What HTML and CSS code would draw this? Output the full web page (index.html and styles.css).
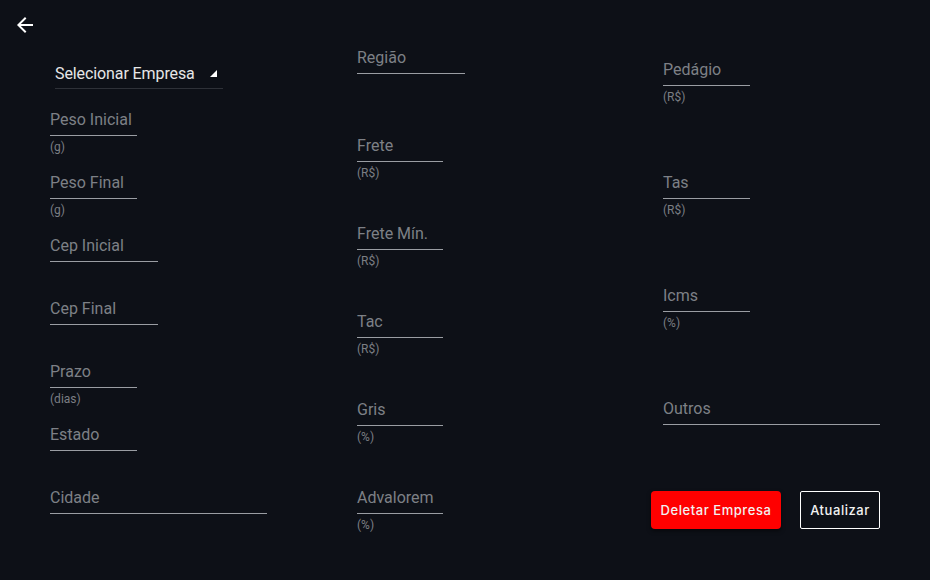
FILE: index.html
```html
<!DOCTYPE html>
<html lang="pt-BR">
<head>
<meta charset="utf-8">
<title>Editar Empresa</title>
<link rel="stylesheet" href="styles.css">
</head>
<body>
<header class="topbar">
  <button class="back" aria-label="Voltar">
    <svg viewBox="0 0 24 24" width="24" height="24"><path fill="currentColor" d="M20 11H7.830l5.59-5.59L12 4l-8 8 8 8 1.41-1.41L7.83 13H20v-2z"/></svg>
  </button>
</header>
<main class="form">
  <section class="col col-1">
    <div class="select">
      <span class="select-text">Selecionar Empresa</span>
      <svg class="select-arrow" viewBox="0 0 7 7" width="7" height="7"><polygon points="0,7 7,0 7,7" fill="#ffffff"/></svg>
    </div>
    <div class="fields">
      <div class="field"><div class="input w-sm">Peso Inicial</div><div class="helper">(g)</div></div>
      <div class="field"><div class="input w-sm">Peso Final</div><div class="helper">(g)</div></div>
      <div class="field"><div class="input w-md">Cep Inicial</div></div>
      <div class="field"><div class="input w-md">Cep Final</div></div>
      <div class="field"><div class="input w-sm">Prazo</div><div class="helper">(dias)</div></div>
      <div class="field"><div class="input w-sm">Estado</div></div>
      <div class="field"><div class="input w-lg">Cidade</div></div>
    </div>
  </section>
  <section class="col col-2">
    <div class="fields">
      <div class="field"><div class="input w-md">Região</div></div>
      <div class="field"><div class="input w-xs">Frete</div><div class="helper">(R$)</div></div>
      <div class="field"><div class="input w-xs">Frete Mín.</div><div class="helper">(R$)</div></div>
      <div class="field"><div class="input w-xs">Tac</div><div class="helper">(R$)</div></div>
      <div class="field"><div class="input w-xs">Gris</div><div class="helper">(%)</div></div>
      <div class="field"><div class="input w-xs">Advalorem</div><div class="helper">(%)</div></div>
    </div>
  </section>
  <section class="col col-3">
    <div class="fields">
      <div class="field"><div class="input w-sm">Pedágio</div><div class="helper">(R$)</div></div>
      <div class="field"><div class="input w-sm">Tas</div><div class="helper">(R$)</div></div>
      <div class="field"><div class="input w-sm">Icms</div><div class="helper">(%)</div></div>
      <div class="field"><div class="input w-lg">Outros</div></div>
    </div>
    <div class="actions">
      <button class="btn btn-danger">Deletar Empresa</button>
      <button class="btn btn-outline">Atualizar</button>
    </div>
  </section>
</main>
</body>
</html>
```
FILE: styles.css
```css
* { box-sizing: border-box; }
html, body {
  margin: 0;
  background: #0d1017;
  width: 930px;
  height: 580px;
  overflow: hidden;
  font-family: Roboto, "Liberation Sans", sans-serif;
}
.topbar {
  height: 44px;
  padding: 13px 0 0 13px;
}
.back {
  display: block;
  width: 24px;
  height: 24px;
  padding: 0;
  margin: 0;
  border: 0;
  background: none;
  color: #ffffff;
}
.back svg { display: block; }
.form {
  display: grid;
  grid-template-columns: 307px 306px 217px;
  padding: 0 50px;
  align-items: start;
}
.col { display: flex; flex-direction: column; }
.col-1 { padding-top: 16px; }
.col-3 { padding-top: 12px; }
.fields { display: flex; flex-direction: column; }
.col-1 .fields { gap: 13px; margin-top: 17px; }
.col-2 .fields { gap: 38px; }
.col-3 .fields { gap: 63px; }
.select {
  display: flex;
  align-items: center;
  justify-content: space-between;
  width: 168px;
  margin-left: 5px;
  padding: 4px 6px 5px 0;
  border-bottom: 1px solid #2e3138;
  font-size: 16px;
  line-height: 19px;
  letter-spacing: -0.1px;
  color: #e6e6e7;
}
.select-arrow { display: block; margin-top: -1px; }
.field { height: 50px; }
.input {
  padding: 4px 0 6px;
  font-size: 16px;
  line-height: 19px;
  color: #7d8086;
  border-bottom: 1px solid #9a9da3;
  white-space: nowrap;
}
.w-xs { width: 86px; }
.w-sm { width: 87px; }
.w-md { width: 108px; }
.w-lg { width: 217px; }
.helper {
  margin-top: 2px;
  font-size: 12px;
  line-height: 18px;
  color: #7b7e84;
}
.actions {
  display: flex;
  justify-content: flex-end;
  gap: 19px;
  margin-top: 46px;
  margin-left: -12px;
}
.btn {
  height: 38px;
  padding: 0;
  font-family: Inter, "Open Sans", sans-serif;
  font-size: 13px;
  font-weight: 500;
  letter-spacing: 0.55px;
  color: #f2f2f2;
  cursor: pointer;
}
.btn-danger {
  width: 130px;
  background: #ff0000;
  border: 0;
  border-radius: 4px;
  box-shadow: 0 2px 4px rgba(0, 0, 0, 0.5);
}
.btn-outline {
  width: 80px;
  background: transparent;
  border: 1px solid #ffffff;
  border-radius: 2px;
}
```
